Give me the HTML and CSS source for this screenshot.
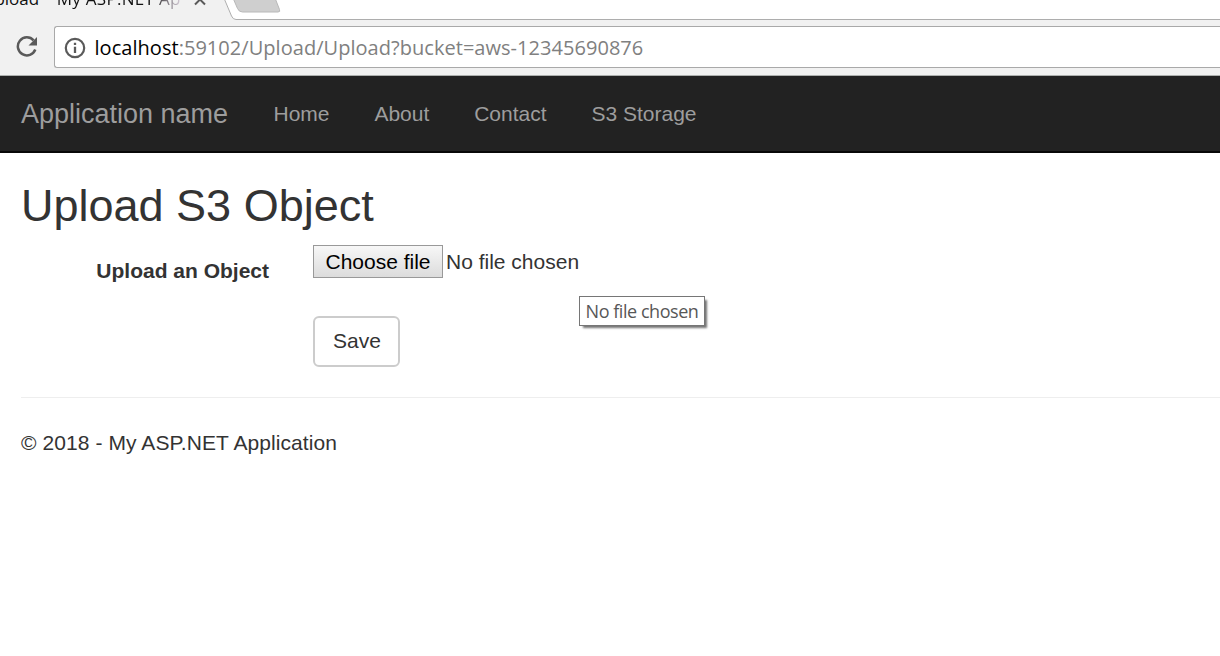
FILE: index.html
```html
<!DOCTYPE html>
<html lang="en">
<head>
<meta charset="utf-8">
<title>Upload - My ASP.NET Application</title>
<link rel="stylesheet" href="styles.css">
</head>
<body>
<header class="browser">
  <div class="tabs">
    <svg class="tab-shape" width="1220" height="21" viewBox="0 0 1220 21">
      <path d="M223 -3L231.500 16.500Q232.700 19.500 235.500 19.500H1220V0H223Z" fill="#fff"/>
      <path d="M223.500 -3L231.500 16Q233 19.500 236 19.500H1220" fill="none" stroke="#adadad"/>
      <path d="M233 -2L237.500 8.500Q239 12 242.500 12H278Q280.500 12 279.500 9.500L275 -2Z" fill="#cfcfcf" stroke="#b8b8b8"/>
      <path d="M195.500 -5L205 4.500M204.500 -5L195 4.500" stroke="#5a5a5a" stroke-width="2"/>
    </svg>
    <div class="tab-title"><span class="tab-name">Upload</span><span class="tab-dash">-</span><span class="tab-app">My ASP.NET Ap</span></div>
  </div>
  <div class="toolbar">
    <svg class="reload" width="22" height="22" viewBox="0 0 22 22">
      <path d="M17.600 4.400A9 9 0 1 0 19.300 13.500" fill="none" stroke="#5a5a5a" stroke-width="2.500"/>
      <path d="M21 1V9.500H12.500Z" fill="#5a5a5a"/>
    </svg>
    <div class="address">
      <svg class="info" width="22" height="22" viewBox="0 0 22 22">
        <circle cx="11" cy="11" r="9.200" fill="none" stroke="#5a5a5a" stroke-width="2.200"/>
        <path d="M11 9.700V16M11 5.700V8" stroke="#5a5a5a" stroke-width="2.300"/>
      </svg>
      <div class="url"><span class="host">localhost</span>:59102/Upload/Upload?bucket=aws-12345690876</div>
    </div>
  </div>
</header>
<nav class="navbar">
  <a class="brand">Application name</a>
  <a class="link">Home</a>
  <a class="link">About</a>
  <a class="link">Contact</a>
  <a class="link">S3 Storage</a>
</nav>
<main class="content">
  <h2 class="title">Upload S3 Object</h2>
  <div class="form">
    <label class="label">Upload an Object</label>
    <div class="fields">
      <div class="file"><button class="choose">Choose file</button><span class="none">No file chosen</span></div>
      <button class="save">Save</button>
    </div>
  </div>
  <footer class="footer">© 2018 - My ASP.NET Application</footer>
</main>
<div class="tooltip">No file chosen</div>
</body>
</html>
```
FILE: styles.css
```css
* { box-sizing: border-box; }
body {
  margin: 0;
  height: 656px;
  overflow: hidden;
  background: #fff;
  color: #333;
  font: 21px/30px "Liberation Sans", Arial, sans-serif;
}
.browser {
  height: 76px;
  background: #f1f1f1;
  border-bottom: 1px solid #adb0ae;
  font-family: "Open Sans", "Noto Sans", sans-serif;
}
.tabs { position: relative; height: 26px; overflow: hidden; }
.tab-shape { position: absolute; left: 0; top: 0; }
.tab-title {
  position: absolute;
  left: -18px;
  top: -13px;
  display: flex;
  gap: 6px;
  font-size: 17px;
  line-height: 24px;
  color: #111;
  white-space: nowrap;
}
.tab-dash { margin-top: -3px; }
.tab-app {
  letter-spacing: .3px;
  background: linear-gradient(90deg, #111 75%, #d8cfda 100%);
  -webkit-background-clip: text;
  background-clip: text;
  color: transparent;
}
.toolbar { display: flex; height: 42px; }
.reload { margin: 10px 16px 0 16px; flex: none; }
.address {
  flex: 1;
  display: flex;
  border: 1px solid #a9a9a9;
  border-right: 0;
  border-radius: 3px 0 0 3px;
  background: #fff;
}
.info { margin: 9.500px 8.200px 0 9.300px; flex: none; }
.url { padding-top: 1px; font-size: 20px; line-height: 40px; letter-spacing: .04px; color: #808080; white-space: nowrap; }
.host { color: #000; }
.navbar {
  display: flex;
  height: 77px;
  padding-left: 21px;
  background: #222;
  border-bottom: 2px solid #080808;
  color: #9d9d9d;
  line-height: 76px;
}
.brand { width: 252.500px; font-size: 27px; }
.link { margin-right: 44.900px; }
.content { padding-left: 21px; }
.title { margin: 0; padding-top: 28px; height: 92px; font-size: 45px; line-height: 50px; font-weight: 400; }
.form { display: flex; height: 152px; }
.label { width: 248px; margin-right: 44px; padding-top: 11px; text-align: right; font-weight: 700; }
.file { display: flex; height: 71px; align-items: flex-start; }
.choose {
  width: 130px;
  height: 33px;
  padding: 0;
  border: 1px solid #999;
  border-radius: 0;
  background: linear-gradient(#f7f7f7, #dcdcdc);
  color: #000;
  font: inherit;
}
.none { margin-left: 3px; line-height: 34px; }
.save {
  width: 87px;
  height: 51px;
  padding: 0 0 2px 1px;
  border: 2px solid #ccc;
  border-radius: 6px;
  background: #fff;
  color: #333;
  font: inherit;
}
.footer { border-top: 1px solid #eee; padding-top: 30px; letter-spacing: .08px; }
.tooltip {
  position: absolute;
  left: 579px;
  top: 296px;
  width: 126px;
  height: 30px;
  border: 1px solid #767676;
  background: #fff;
  box-shadow: 3px 3px 2px -1px rgba(0, 0, 0, .55);
  color: #575757;
  font: 18px/29px "Open Sans", "Noto Sans", sans-serif;
  letter-spacing: -.45px;
  text-align: center;
  white-space: nowrap;
}
```
